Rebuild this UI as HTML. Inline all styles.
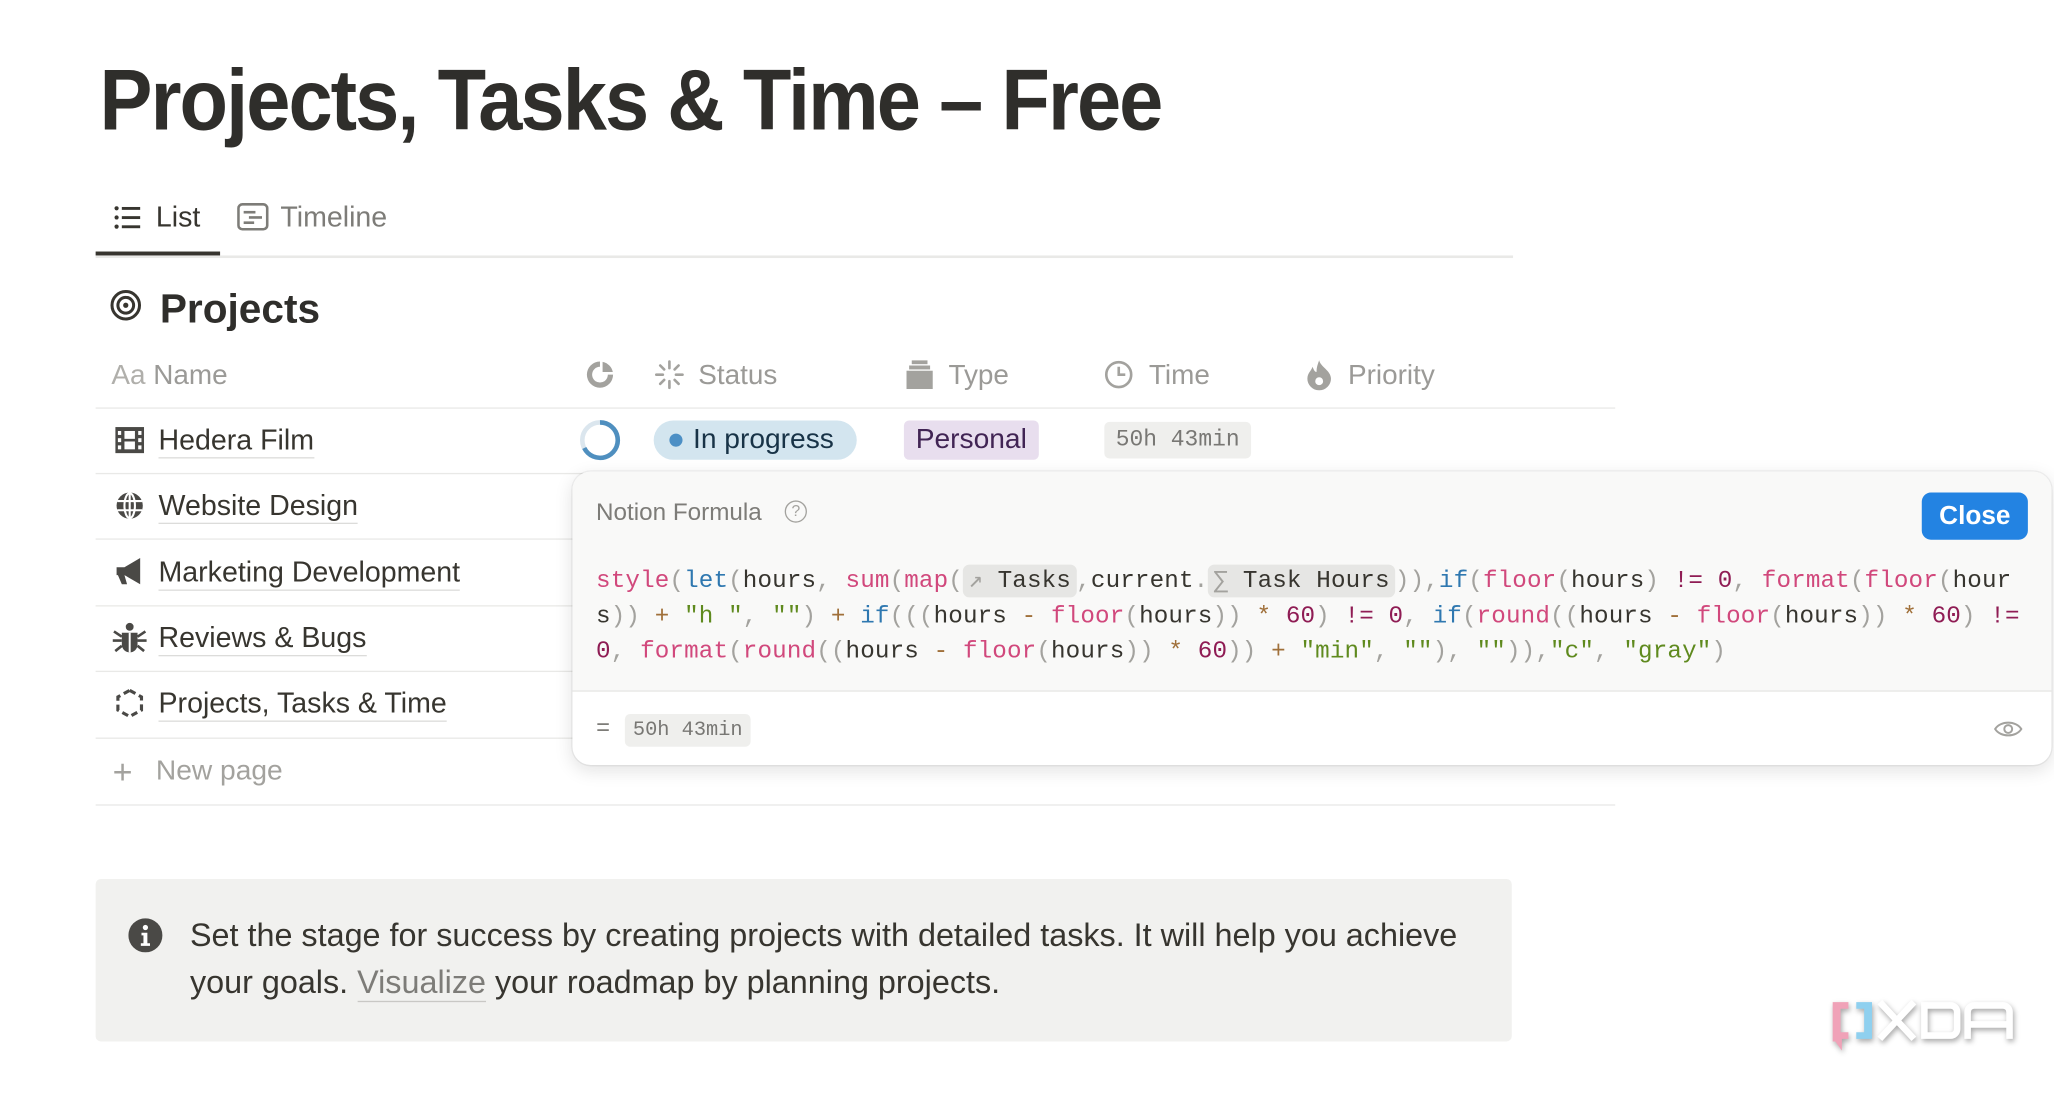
<!DOCTYPE html>
<html><head><meta charset="utf-8">
<style>
html,body{margin:0;padding:0;background:#fff;width:2054px;height:1094px;overflow:hidden}
#w{position:absolute;left:0;top:0;width:1568px;height:835px;transform:scale(1.31);transform-origin:0 0;font-family:"Liberation Sans",sans-serif;color:#37352f}
.a{position:absolute;white-space:nowrap}
.hl{position:absolute;height:1px;background:#e9e9e7}
.row{font-size:21.8px;color:#37352f}
.row span.t{border-bottom:1.5px solid #dcdcda;padding-bottom:1px}
.hd{font-size:21.3px;color:#9b9a97}
.mono{font-family:"Liberation Mono",monospace}
.code{font-size:18.5px;color:#37352f;letter-spacing:0.1px}
.f{color:#d1487c}.k{color:#2f78b0}.n{color:#8f1c54}.s{color:#5f8a1e}.o{color:#a0703a}.p{color:#a3a29e}
.chip{background:#e6e6e4;border-radius:5px;padding:2px 4px}
</style></head><body><div id="w">
<div class="a" style="left:76px;top:38px;font-size:66px;font-weight:bold;letter-spacing:-1.6px;color:#2f2e2b;transform:scaleX(0.918);transform-origin:0 0">Projects, Tasks &amp; Time – Free</div>

<!-- tabs -->
<svg class="a" style="left:86px;top:155px" width="22" height="22" viewBox="0 0 22 22"><g fill="#37352f"><circle cx="3" cy="4" r="1.6"/><circle cx="3" cy="11" r="1.6"/><circle cx="3" cy="18" r="1.6"/><rect x="7" y="3" width="14" height="2.2"/><rect x="7" y="10" width="14" height="2.2"/><rect x="7" y="17" width="14" height="2.2"/></g></svg>
<div class="a" style="left:119px;top:153px;font-size:21.8px;color:#37352f">List</div>
<svg class="a" style="left:181px;top:155px" width="24" height="22" viewBox="0 0 24 22"><rect x="1" y="1" width="22" height="19" rx="3" fill="none" stroke="#7d7c78" stroke-width="2"/><rect x="5" y="6" width="9" height="2" fill="#7d7c78"/><rect x="9" y="10" width="10" height="2" fill="#7d7c78"/><rect x="5" y="14" width="8" height="2" fill="#7d7c78"/></svg>
<div class="a" style="left:214px;top:153px;font-size:21.8px;color:#7d7c78">Timeline</div>
<div class="hl" style="left:73px;top:195px;width:1082px;height:1.5px"></div>
<div class="a" style="left:73px;top:192px;width:95px;height:3px;background:#37352f"></div>

<!-- Projects heading -->
<svg class="a" style="left:84px;top:221px" width="24" height="24" viewBox="0 0 24 24"><circle cx="12" cy="12" r="10.5" fill="none" stroke="#37352f" stroke-width="2.3"/><circle cx="12" cy="12" r="6" fill="none" stroke="#37352f" stroke-width="2.3"/><circle cx="12" cy="12" r="2" fill="#37352f"/></svg>
<div class="a" style="left:122px;top:218px;font-size:31px;font-weight:bold;color:#2f2e2b">Projects</div>

<!-- header row -->
<div class="a hd" style="left:85px;top:274px"><span style="color:#b0afab">Aa</span> Name</div>
<svg class="a" style="left:447px;top:275px" width="22" height="22" viewBox="0 0 22 22"><path d="M11 1a10 10 0 1 0 10 10h-4a6 6 0 1 1-6-6z" fill="#a3a29e"/><path d="M13 1.2a10 10 0 0 1 7.8 7.8h-7.8z" fill="#a3a29e"/></svg>
<svg class="a" style="left:499px;top:274px" width="24" height="24" viewBox="0 0 24 24"><g stroke="#a3a29e" stroke-width="2" stroke-linecap="round"><path d="M12 2v5M12 17v5M2 12h5M17 12h5M5 5l3 3M16 16l3 3M5 19l3-3M16 8l3-3"/></g></svg>
<div class="a hd" style="left:533px;top:274px">Status</div>
<svg class="a" style="left:691px;top:275px" width="22" height="22" viewBox="0 0 22 22"><g fill="#a3a29e"><rect x="5" y="0" width="12" height="3"/><rect x="3" y="4" width="16" height="3"/><rect x="1" y="8" width="20" height="14"/></g></svg>
<div class="a hd" style="left:724px;top:274px">Type</div>
<svg class="a" style="left:843px;top:275px" width="22" height="22" viewBox="0 0 22 22"><circle cx="11" cy="11" r="9.5" fill="none" stroke="#a3a29e" stroke-width="2"/><path d="M11 5v6h5" fill="none" stroke="#a3a29e" stroke-width="2"/></svg>
<div class="a hd" style="left:877px;top:274px">Time</div>
<svg class="a" style="left:996px;top:274px" width="22" height="24" viewBox="0 0 22 24"><path d="M11 1c1 5 9 8 9 14a9 9 0 0 1-18 0c0-4 3-6 4-9 1 3 2 4 3 4 0-4 1-6 2-9z" fill="#a3a29e"/><circle cx="11" cy="17" r="3" fill="#fff"/></svg>
<div class="a hd" style="left:1029px;top:274px">Priority</div>
<div class="hl" style="left:73px;top:311px;width:1160px"></div>

<!-- rows -->
<svg class="a" style="left:88px;top:326px" width="22" height="20" viewBox="0 0 22 20"><rect x="0" y="0" width="22" height="20" fill="#4a4946"/><g fill="#fff"><rect x="2" y="3" width="2.5" height="3"/><rect x="2" y="8.5" width="2.5" height="3"/><rect x="2" y="14" width="2.5" height="3"/><rect x="17.5" y="3" width="2.5" height="3"/><rect x="17.5" y="8.5" width="2.5" height="3"/><rect x="17.5" y="14" width="2.5" height="3"/><rect x="7" y="3" width="8" height="6"/><rect x="7" y="11" width="8" height="6"/></g></svg>
<div class="a row" style="left:121px;top:323px"><span class="t">Hedera Film</span></div>
<svg class="a" style="left:442px;top:320px" width="32" height="32" viewBox="0 0 32 32"><circle cx="16" cy="16" r="13.5" fill="none" stroke="#dbe6ee" stroke-width="3.5"/><path d="M16 2.5A13.5 13.5 0 1 1 4 22" fill="none" stroke="#4f8fbf" stroke-width="3.5"/></svg>
<div class="a" style="left:499px;top:321px;width:155px;height:30px;border-radius:15px;background:#d3e5ef"></div>
<div class="a" style="left:511px;top:331px;width:10px;height:10px;border-radius:5px;background:#4c8fc5"></div>
<div class="a" style="left:529px;top:323px;font-size:21.5px;color:#183347">In progress</div>
<div class="a" style="left:690px;top:321px;width:103px;height:30px;border-radius:4px;background:#e8deee"></div>
<div class="a" style="left:699px;top:323px;font-size:21.5px;color:#412454">Personal</div>
<div class="a mono" style="left:843px;top:322px;width:112px;height:28px;border-radius:4px;background:#efefed;font-size:17.5px;color:#787774;line-height:28px;text-align:center">50h 43min</div>
<div class="hl" style="left:73px;top:361px;width:1160px"></div>

<svg class="a" style="left:88px;top:375px" width="22" height="22" viewBox="0 0 22 22"><circle cx="11" cy="11" r="10" fill="#4a4946"/><g fill="none" stroke="#fff" stroke-width="1.6"><ellipse cx="11" cy="11" rx="4" ry="9.5"/><path d="M1.5 7.5h19M1.5 14.5h19M11 1v20"/></g></svg>
<div class="a row" style="left:121px;top:373px"><span class="t">Website Design</span></div>
<div class="hl" style="left:73px;top:411px;width:370px"></div>

<svg class="a" style="left:88px;top:425px" width="22" height="22" viewBox="0 0 22 22"><path d="M1 8h6l12-7v20L7 14l2 7H5L2 14H1z" fill="#4a4946"/></svg>
<div class="a row" style="left:121px;top:424px"><span class="t">Marketing Development</span></div>
<div class="hl" style="left:73px;top:462px;width:370px"></div>

<svg class="a" style="left:86px;top:475px" width="26" height="24" viewBox="0 0 26 24"><g fill="#4a4946"><circle cx="13" cy="3.5" r="3"/><path d="M7 8h12v9a6 6 0 0 1-12 0z"/></g><g stroke="#4a4946" stroke-width="2"><path d="M1 7l6 4M25 7l-6 4M0 14h7M26 14h-7M2 22l5-4M24 22l-5-4"/></g><path d="M13 8v15" stroke="#fff" stroke-width="1.5"/></svg>
<div class="a row" style="left:121px;top:474px"><span class="t">Reviews &amp; Bugs</span></div>
<div class="hl" style="left:73px;top:512px;width:370px"></div>

<svg class="a" style="left:88px;top:525px" width="22" height="24" viewBox="0 0 22 24"><path d="M11 2l9 5v10l-9 5-9-5V7z" fill="none" stroke="#4a4946" stroke-width="2.4" stroke-dasharray="5 3"/></svg>
<div class="a row" style="left:121px;top:524px"><span class="t">Projects, Tasks &amp; Time</span></div>
<div class="hl" style="left:73px;top:563px;width:370px"></div>

<div class="a" style="left:86px;top:574px;font-size:26px;color:#a3a29e;font-weight:300">+</div>
<div class="a" style="left:119px;top:576px;font-size:21.5px;color:#a3a29e">New page</div>
<div class="hl" style="left:73px;top:614px;width:1160px"></div>

<!-- popup -->
<div class="a" style="left:437px;top:360px;width:1129px;height:224px;border-radius:14px;background:#fff;box-shadow:0 0 0 1px rgba(15,15,15,.06),0 4px 14px rgba(15,15,15,.12);overflow:hidden">
  <div style="position:absolute;left:0;top:0;right:0;height:167px;background:#f9f9f8;border-bottom:1.5px solid #e6e6e4"></div>
</div>
<div class="a" style="left:455px;top:380px;font-size:18.5px;color:#7d7c78">Notion Formula</div>
<div class="a" style="left:599px;top:382px;width:15px;height:15px;border:1.5px solid #a3a29e;border-radius:50%;font-size:12px;line-height:15px;text-align:center;color:#a3a29e">?</div>
<div class="a" style="left:1467px;top:376px;width:81px;height:36px;border-radius:7px;background:#2383e2;color:#fff;font-size:20px;font-weight:bold;line-height:36px;text-align:center">Close</div>

<div class="a mono code" style="left:455px;top:432px"><span class="f">style</span><span class="p">(</span><span class="k">let</span><span class="p">(</span>hours<span class="p">,</span> <span class="f">sum</span><span class="p">(</span><span class="f">map</span><span class="p">(</span><span class="chip"><span class="p">↗</span> Tasks</span><span class="p">,</span>current<span class="p">.</span><span class="chip"><span class="p">∑</span> Task Hours</span><span class="p">)),</span><span class="k">if</span><span class="p">(</span><span class="f">floor</span><span class="p">(</span>hours<span class="p">)</span> <span class="n">!=</span> <span class="n">0</span><span class="p">,</span> <span class="f">format</span><span class="p">(</span><span class="f">floor</span><span class="p">(</span>hour</div>
<div class="a mono code" style="left:455px;top:460px">s<span class="p">))</span> <span class="o">+</span> <span class="s">"h "</span><span class="p">,</span> <span class="s">""</span><span class="p">)</span> <span class="o">+</span> <span class="k">if</span><span class="p">(((</span>hours <span class="o">-</span> <span class="f">floor</span><span class="p">(</span>hours<span class="p">))</span> <span class="o">*</span> <span class="n">60</span><span class="p">)</span> <span class="n">!=</span> <span class="n">0</span><span class="p">,</span> <span class="k">if</span><span class="p">(</span><span class="f">round</span><span class="p">((</span>hours <span class="o">-</span> <span class="f">floor</span><span class="p">(</span>hours<span class="p">))</span> <span class="o">*</span> <span class="n">60</span><span class="p">)</span> <span class="n">!=</span></div>
<div class="a mono code" style="left:455px;top:487px"><span class="n">0</span><span class="p">,</span> <span class="f">format</span><span class="p">(</span><span class="f">round</span><span class="p">((</span>hours <span class="o">-</span> <span class="f">floor</span><span class="p">(</span>hours<span class="p">))</span> <span class="o">*</span> <span class="n">60</span><span class="p">))</span> <span class="o">+</span> <span class="s">"min"</span><span class="p">,</span> <span class="s">""</span><span class="p">),</span> <span class="s">""</span><span class="p">)),</span><span class="s">"c"</span><span class="p">,</span> <span class="s">"gray"</span><span class="p">)</span></div>

<div class="a mono" style="left:455px;top:547px;font-size:18px;color:#7d7c78">=</div>
<div class="a mono" style="left:477px;top:545px;width:96px;height:25px;border-radius:4px;background:#efefed;font-size:15.5px;color:#787774;line-height:25px;text-align:center">50h 43min</div>
<svg class="a" style="left:1522px;top:549px" width="22" height="15" viewBox="0 0 22 15"><path d="M1 7.5C5 1 17 1 21 7.5 17 14 5 14 1 7.5z" fill="none" stroke="#a3a29e" stroke-width="1.5"/><circle cx="11" cy="7.5" r="3" fill="none" stroke="#a3a29e" stroke-width="1.5"/></svg>

<!-- callout -->
<div class="a" style="left:73px;top:671px;width:1081px;height:124px;border-radius:4px;background:#f1f1ef"></div>
<svg class="a" style="left:98px;top:701px" width="26" height="26" viewBox="0 0 26 26"><circle cx="13" cy="13" r="13" fill="#4a4946"/><circle cx="13" cy="7" r="2" fill="#fff"/><path d="M10 11h4.5v8h2v2h-7v-2h2v-6h-1.5z" fill="#fff"/></svg>
<div class="a" style="left:145px;top:697px;font-size:24.7px;color:#37352f;line-height:36px">Set the stage for success by creating projects with detailed tasks. It will help you achieve<br>your goals. <span style="color:#7d7c78;border-bottom:1px solid #c9c8c5">Visualize</span> your roadmap by planning projects.</div>

<!-- xda -->
<div class="a" style="left:1397px;top:760px;filter:drop-shadow(1px 2px 2px rgba(0,0,0,.35))">
<svg width="145" height="45" viewBox="0 0 145 45"><path d="M2 5h12v5H8v18h6v5H9v9l-5-7H2z" fill="#f0a2b8"/><path d="M20 5h12v28H20v-5h6V10h-6z" fill="#8fd0ef"/><g fill="none" stroke="#fff" stroke-width="5"><path d="M38 5l26 28M64 5L38 33"/><path d="M72 7.5h20a5 5 0 0 1 5 5v13a5 5 0 0 1-5 5H72z"/><path d="M105 33V12.5a5 5 0 0 1 5-5h22a5 5 0 0 1 5 5V33M105 22h32"/></g></svg>
</div>
</div></body></html>
